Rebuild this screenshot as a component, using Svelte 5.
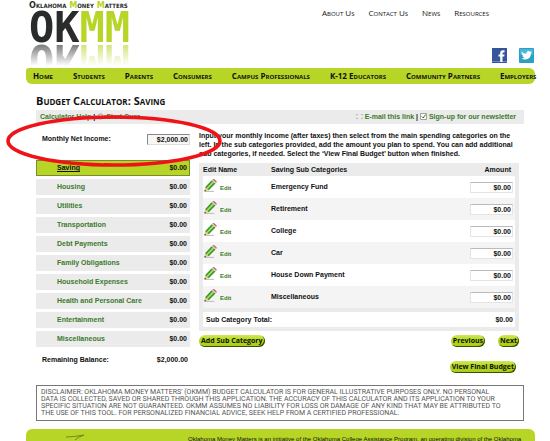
<script lang="ts">
  const topLinks = ['About Us', 'Contact Us', 'News', 'Resources'];
  const navLinks = [
    'Home',
    'Students',
    'Parents',
    'Consumers',
    'Campus Professionals',
    'K-12 Educators',
    'Community Partners',
    'Employers'
  ];
  const categories = [
    'Saving',
    'Housing',
    'Utilities',
    'Transportation',
    'Debt Payments',
    'Family Obligations',
    'Household Expenses',
    'Health and Personal Care',
    'Entertainment',
    'Miscellaneous'
  ];

  let active = $state('Saving');
  let income = $state('$2,000.00');
  let items = $state([
    { name: 'Emergency Fund', amount: '$0.00' },
    { name: 'Retirement', amount: '$0.00' },
    { name: 'College', amount: '$0.00' },
    { name: 'Car', amount: '$0.00' },
    { name: 'House Down Payment', amount: '$0.00' },
    { name: 'Miscellaneous', amount: '$0.00' }
  ]);
</script>

{#snippet pencil()}
  <svg class="pencil" viewBox="0 0 13 13" aria-hidden="true">
    <path d="M1 12.4h9" stroke="#bbb" stroke-width="1" />
    <path d="M.4 12.6l.7-4.400 3.700 3z" fill="#e8c98c" />
    <path d="M.4 12.6l.3-1.900 1.400 1.300z" fill="#222" />
    <path d="M1.100 8.200L7.600 1.300l3.900 3.200-6.700 6.700z" fill="#3f9526" />
    <path d="M2.300 9.200L8.800 2.300l1.400 1.100-6.700 6.800z" fill="#a4dc6c" />
    <path d="M7.600 1.300l.8-.8 3.900 3.200-.8.800z" fill="#c9d3d6" />
    <path d="M8.400.5Q9.300-.3 10.300.3l2 1.600q.9.900 0 1.800z" fill="#d95b6b" />
  </svg>
{/snippet}

<div class="page">
  <header>
    <a class="logo" href="#home" aria-label="Oklahoma Money Matters">
      <span class="tagline">Oklahoma <b>M</b>oney <b>M</b>atters</span>
      <span class="wordmark">OK<b>MM</b></span>
    </a>
    <div class="header-right">
      <div class="top-links">
        {#each topLinks as link}
          <a href="#top">{link}</a>
        {/each}
      </div>
      <div class="social">
        <a href="#facebook" aria-label="Facebook">
          <svg viewBox="0 0 15 15">
            <rect width="15" height="15" fill="#35559a" />
            <rect y="13" width="15" height="1" fill="#6d86bd" />
            <path d="M8.2 14V8.6H6.5V6.4h1.7V5q0-2.7 2.7-2.7h1.6v2.2h-1.1q-.9 0-.9.9v1h2l-.3 2.2h-1.7V14z" fill="#fff" />
          </svg>
        </a>
        <a href="#twitter" aria-label="Twitter">
          <svg viewBox="0 0 15 15">
            <rect width="15" height="15" rx="1" fill="#2b9fc6" />
            <rect x="1" y="1" width="13" height="6" fill="#4bb6d8" />
            <path d="M2.5 3.4Q4.700 5.600 7.300 5.700 7.200 3.200 9.400 3q1.100 0 1.700.7l1.500-.5-.7 1.200 1.100-.2-1.100 1.200q0 5.600-5.700 6-2.300 0-3.900-1 2 0 3.100-1-1.600-.2-2-1.500h1Q2.700 7.300 2.700 5.700l.9.2Q2.200 4.700 2.500 3.400z" fill="#fff" />
          </svg>
        </a>
      </div>
    </div>
  </header>

  <nav>
    {#each navLinks as link}
      <a href="#nav">{link}</a>
    {/each}
  </nav>

  <main>
    <h1>Budget Calculator: Saving</h1>

    <div class="toolbar">
      <div>
        <a href="#help">Calculator Help</a> |
        <a href="#reset">
          <svg class="tool-icon" viewBox="0 0 7 7"><circle cx="3.500" cy="3.500" r="2.500" fill="none" stroke="#8aa283" /></svg>
          Start Over
        </a>
      </div>
      <div>
        <a href="#email">
          <svg class="tool-icon" viewBox="0 0 7 7"><path d="M.5 2.500v-1h1.500M5 1.500h1.500v1M.5 4.500v1h1.500M5 5.500h1.500v-1" fill="none" stroke="#b5bdb2" /></svg>
          E-mail this link
        </a>
        |
        <a href="#newsletter">
          <svg class="tool-icon" viewBox="0 0 7 7"><path d="M.5.5h6v6h-6z" fill="#fff" stroke="#9aa596" /><path d="M1.800 3.500l1.400 1.500 2.300-3.500" fill="none" stroke="#4c6645" /></svg>
          Sign-up for our newsletter
        </a>
      </div>
    </div>

    <div class="columns">
      <section class="sidebar">
        <div class="income">
          <label for="income">Monthly Net Income:</label>
          <input id="income" type="text" bind:value={income} />
        </div>
        <ul>
          {#each categories as category}
            <li class:active={category === active}>
              <a href="#category" onclick={() => (active = category)}>{category}</a>
              <span>$0.00</span>
            </li>
          {/each}
        </ul>
        <div class="balance">
          <span>Remaining Balance:</span>
          <span>$2,000.00</span>
        </div>
        <svg class="highlight" viewBox="0 0 216 52" aria-hidden="true">
          <ellipse cx="108" cy="26" rx="106" ry="24" />
        </svg>
      </section>

      <section class="details">
        <p class="intro">
          Input your monthly income (after taxes) then select from the main spending categories on the<br />
          left. In the sub categories provided, add the amount you plan to spend. You can add additional<br />
          sub categories, if needed. Select the ‘View Final Budget’ button when finished.
        </p>
        <table>
          <thead>
            <tr>
              <th class="edit">Edit Name</th>
              <th>Saving Sub Categories</th>
              <th class="amount">Amount</th>
            </tr>
          </thead>
          <tbody>
            {#each items as item, i}
              <tr>
                <td><a class="edit-link" href="#edit">{@render pencil()}Edit</a></td>
                <td><label for="item-{i}">{item.name}</label></td>
                <td class="amount"><input id="item-{i}" type="text" bind:value={item.amount} /></td>
              </tr>
            {/each}
          </tbody>
          <tfoot>
            <tr>
              <td colspan="2">Sub Category Total:</td>
              <td class="amount">$0.00</td>
            </tr>
          </tfoot>
        </table>
        <div class="actions">
          <button type="button">Add Sub Category</button>
          <div class="pager">
            <button type="button">Previous</button>
            <button type="button">Next</button>
          </div>
        </div>
        <div class="final">
          <button type="button">View Final Budget</button>
        </div>
      </section>
    </div>

    <p class="disclaimer">
      DISCLAIMER: OKLAHOMA MONEY MATTERS' (OKMM) BUDGET CALCULATOR IS FOR GENERAL ILLUSTRATIVE PURPOSES ONLY. NO PERSONAL<br />
      DATA IS COLLECTED, SAVED OR SHARED THROUGH THIS APPLICATION. THE ACCURACY OF THIS CALCULATOR AND ITS APPLICATION TO YOUR<br />
      SPECIFIC SITUATION ARE NOT GUARANTEED. OKMM ASSUMES NO LIABILITY FOR LOSS OR DAMAGE OF ANY KIND THAT MAY BE ATTRIBUTED TO<br />
      THE USE OF THIS TOOL. FOR PERSONALIZED FINANCIAL ADVICE, SEEK HELP FROM A CERTIFIED PROFESSIONAL.
    </p>
  </main>

  <footer>
    <svg viewBox="0 0 20 8" aria-hidden="true"><path d="M0 3Q8 3 18 1 12 3 9 6" fill="none" stroke="#6d8a1c" /></svg>
    <p>Oklahoma Money Matters is an initiative of the Oklahoma College Assistance Program, an operating division of the Oklahoma</p>
  </footer>
</div>

<style>
  :global(body) {
    margin: 0;
    background: #fff;
    overflow: hidden;
  }

  .page {
    padding: 0 15px 0 26px;
    font: bold 7px/10px "Liberation Sans", Arial, sans-serif;
    color: #111;
    white-space: nowrap;
  }

  a {
    color: #3d7a2b;
    text-decoration: none;
  }

  header {
    display: flex;
    justify-content: space-between;
    height: 68px;
    overflow: hidden;
  }

  .logo {
    display: flex;
    flex-direction: column;
    padding-left: 3px;
    color: #2a2c2b;
  }

  .logo b {
    color: #b7d526;
  }

  .tagline {
    font: small-caps bold 9px/11px "DejaVu Sans Condensed", "DejaVu Sans", sans-serif;
  }

  .wordmark {
    font: bold 42px/34px "DejaVu Sans Mono", monospace;
    -webkit-box-reflect: below -3px linear-gradient(transparent 30%, rgba(0, 0, 0, 0.7));
  }

  .header-right {
    display: flex;
    flex-direction: column;
    justify-content: space-between;
    align-items: flex-end;
    padding: 8px 1px 5px 0;
  }

  .top-links {
    display: flex;
    gap: 14px;
    padding-right: 45px;
    font: small-caps 8px/10px "Open Sans", "Trebuchet MS", sans-serif;
  }

  .top-links a,
  nav a {
    color: #111;
  }

  .social {
    display: flex;
    gap: 12px;
  }

  .social svg {
    display: block;
    width: 15px;
    height: 15px;
  }

  nav {
    display: flex;
    gap: 20px;
    padding-left: 7px;
    border-radius: 3px 6px 6px 6px;
    background: #b7d526;
    font: small-caps bold 8px/16px "Open Sans", "Trebuchet MS", sans-serif;
  }

  main {
    padding: 9px 11px 0 10px;
  }

  h1 {
    margin: 0 0 1px;
    font: small-caps bold 11px/16px "Open Sans", "Trebuchet MS", sans-serif;
  }

  .toolbar {
    display: flex;
    justify-content: space-between;
    padding: 0 8px 0 4px;
    background: #ebebeb;
    line-height: 14px;
  }

  .tool-icon {
    width: 7px;
    height: 7px;
    vertical-align: -1px;
  }

  .columns {
    display: flex;
    gap: 9px;
    padding: 6px 5px 0 0;
  }

  .sidebar {
    position: relative;
    flex: 0 0 154px;
  }

  .income,
  .balance {
    display: flex;
    justify-content: space-between;
    align-items: center;
    padding-left: 6px;
  }

  .income {
    height: 18px;
  }

  .balance {
    padding: 8px 2px 0 6px;
  }

  input {
    box-sizing: border-box;
    width: 43px;
    height: 11px;
    margin: 0;
    padding: 0 1px;
    border: 1px solid #e4e4e4;
    border-top-color: #bbb;
    background: #fff;
    color: #111;
    font: inherit;
    text-align: right;
  }

  #income {
    border-color: #888 #ddd #ddd #888;
    background: #f6f6f6;
  }

  ul {
    display: flex;
    flex-direction: column;
    gap: 3px;
    margin: 12px 0 0;
    padding: 0;
    list-style: none;
  }

  li {
    display: flex;
    justify-content: space-between;
    padding: 0 3px 0 21px;
    background: #ebebeb;
    line-height: 16px;
  }

  li.active {
    box-shadow: inset 0 0 0 1px #7c8c2c;
    background: #b7d526;
  }

  li.active a {
    color: #111;
    text-decoration: underline;
  }

  .highlight {
    position: absolute;
    top: -15px;
    left: -30px;
    width: 216px;
    height: 52px;
    pointer-events: none;
  }

  .highlight ellipse {
    fill: none;
    stroke: #ee1318;
    stroke-width: 3.6;
  }

  .details {
    flex: 1;
    min-width: 0;
  }

  .intro {
    margin: 1px 0 5px;
    line-height: 9px;
  }

  table {
    width: 100%;
    border: 4px solid #ebebeb;
    border-top: 0;
    border-collapse: separate;
    border-spacing: 0;
    box-sizing: border-box;
  }

  th,
  td {
    padding: 0;
    text-align: left;
  }

  th {
    height: 13px;
    background: #ebebeb;
  }

  .edit {
    width: 68px;
  }

  tbody td {
    height: 22px;
  }

  tbody tr:nth-child(even) td {
    background: #f4f4f4;
  }

  .amount {
    padding-right: 2px;
    text-align: right;
  }

  th.amount {
    padding-right: 4px;
  }

  .edit-link {
    display: flex;
    align-items: flex-end;
    gap: 3px;
    padding: 0 0 3px 1px;
    font-size: 6px;
    line-height: 8px;
  }

  .pencil {
    width: 13px;
    height: 13px;
  }

  tfoot td {
    height: 15px;
    padding-left: 3px;
    border-top: 4px solid #ebebeb;
  }

  .actions,
  .pager {
    display: flex;
    justify-content: space-between;
  }

  .actions {
    padding-top: 4px;
  }

  .pager {
    gap: 13px;
  }

  .final {
    padding: 14px 3px 0 0;
    text-align: right;
  }

  button {
    margin: 0;
    padding: 0 2px 1px;
    border: 0;
    border-radius: 6px;
    background: linear-gradient(#cfe860, #b4d818 40%, #a9cc18);
    box-shadow: inset -1px -1px 0 #3f4d0a;
    color: #111;
    font: bold 7px/11px "Open Sans", Verdana, sans-serif;
  }

  .disclaimer {
    margin: 12px 0 0;
    padding: 3px 4px;
    border: 1px solid #777;
    color: #555;
    font: 7px/7px Roboto, Arial, sans-serif;
  }

  footer {
    display: flex;
    gap: 102px;
    margin-top: 8px;
    padding: 5px 0 10px 40px;
    border-radius: 6px;
    background: #b7d526;
  }

  footer svg {
    width: 20px;
    height: 8px;
  }

  footer p {
    margin: 0;
    font-weight: normal;
    font-size: 6px;
  }
</style>
